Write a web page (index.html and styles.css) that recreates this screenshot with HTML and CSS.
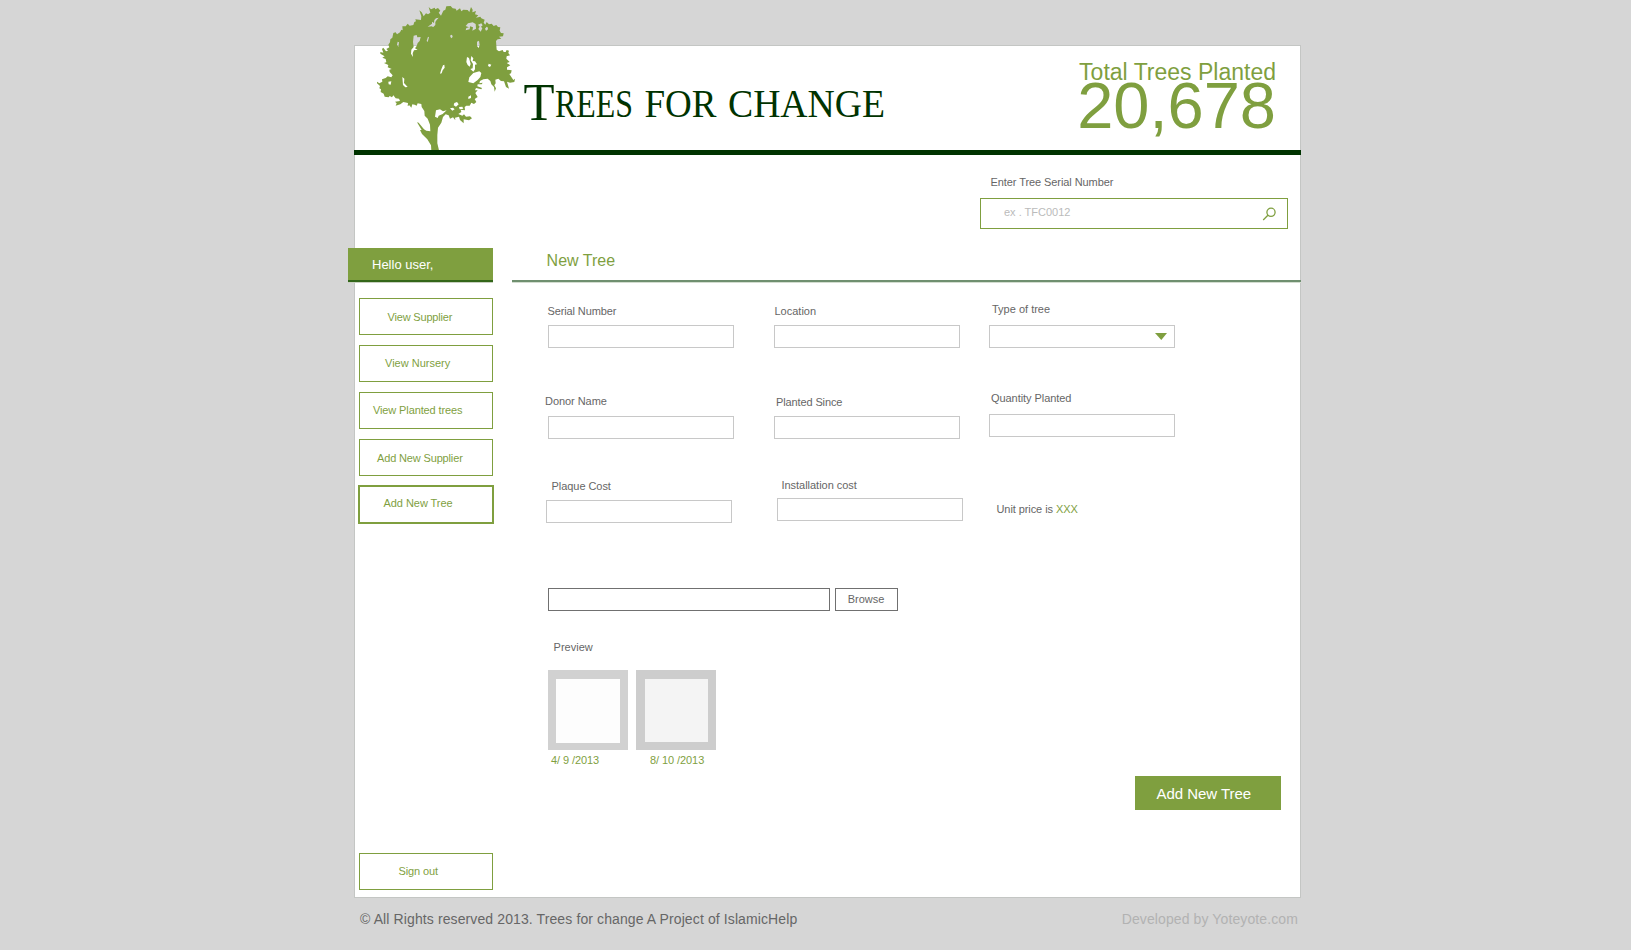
FILE: index.html
```html
<!DOCTYPE html>
<html lang="en">
<head>
<meta charset="utf-8">
<title>Trees for change</title>
<link rel="stylesheet" href="styles.css">
</head>
<body>
<div class="page">
  <div class="panel">
    <header class="header">
      <svg class="tree" viewBox="0 0 600 495" aria-hidden="true">
        <path fill="#7f9f3f" fill-rule="evenodd" d="M274 451L273 436L262 418L246 402L240 390L245 390L231 367L236 368L252 388L259 392L271 394L270 374L263 356L254 347L253 333L245 321L244 312L233 310L230 317L224 314L217 313L214 323L208 316L203 318L204 309L190 306L181 313L167 317L170 310L165 305L180 303L177 296L167 295L160 286L156 292L149 288L146 292L134 290L131 281L122 276L123 268L118 265L120 258L111 250V245L118 250L127 245L126 238L137 234L143 229L154 232L158 226L149 216L148 209L155 207L143 202L145 195L132 189L139 187L137 177L127 173L134 169L121 161V156L130 158L126 147L130 143L138 154L144 152L139 147L148 142L145 134L150 127L151 118L157 113L160 99L167 97L171 103L180 97L184 89L188 91L187 79L197 79L203 71L209 77L220 75L223 66L228 64L226 58L243 60L244 49L238 31L245 37L251 49L258 40L264 43L271 38L266 21L273 28L284 23L286 28L294 24L301 32L296 38L303 47L310 32L316 29L319 19L332 18L338 25L347 26L350 32L360 25L364 34L370 29L383 30L388 36L393 21L398 29L397 37L408 33L405 43L415 46L408 53L421 50L424 55L434 59L431 68L436 74L440 66L447 73L455 71L461 78L469 75L474 81L481 82L479 92L483 99L491 100L489 109L477 110L484 116L473 118L468 123L470 149L477 154L488 150L491 156L497 156L500 150L507 152L505 159L510 166L500 169L499 176L509 186L500 189L511 196L501 202L501 209L515 211L513 220L508 222L520 240L525 236L523 246L510 248L501 245L507 266L498 261L492 244L483 243L475 236L466 239L467 250L463 256L468 265L464 275L462 261L454 253L451 243L443 236L430 238L420 243L418 250L428 248L425 253L413 253L412 259L426 264L424 268L408 264L405 271L413 271L406 279L413 291L404 297L409 306L402 312L394 308L389 317L379 317L374 321L375 331L362 329L364 336L355 342L367 347L372 343L378 350L390 349L396 355L387 361L371 358V370L360 360L357 350L345 353L346 361L339 352L330 356L326 346L317 343L309 351L304 368L294 383L292 405L292 430L297 451Z
          M221 107L230 105L232 112L242 111L239 123L233 129L230 138L225 145L233 149L222 151L218 160L219 171L213 161L214 149L221 141L219 126Z
          M288 55L296 53L290 60L286 66V75L279 82L276 79L263 80L276 71L276 65L282 69L283 60Z
          M384 70L398 67L407 72L408 86L397 92L399 82L390 79L389 88L377 91L379 84L387 82L377 78Z
          M414 74L424 70L428 76L423 80L427 85L422 95L415 87L419 80Z
          M440 80L444 83L443 89L438 92L435 86Z
          M411 125L417 122L419 135L416 144L411 138Z
          M331 106L336 104L338 110L335 115L331 111Z
          M313 194L314 203L308 211L305 220L300 221L304 208L309 196Z
          M381 171L387 174L392 192L389 200L383 195L379 186Z
          M394 168L400 175L398 183L405 184L411 193L405 194L405 208L400 215L391 207L398 205L399 192L392 181Z
          M385 246L388 232L400 219L418 214L424 219L421 231L413 240L400 250Z
          M187 231L193 236L192 249L203 261L196 262L189 255Z
          M145 245L154 244L152 254L146 253Z
          M173 125L177 127L175 140L171 134Z
          M264 110L267 112L263 126L260 123Z
          M288 331L300 328L309 334L320 331L308 342L296 347L293 354L285 350Z
          M343 309L351 306L356 313L348 320L341 316Z
          M330 325L339 323L344 328L337 332Z
          M357 321L367 320L370 326L359 328Z
          M385 290L393 286L393 294L385 297Z
          M446 191L454 194L450 201L444 198Z"/>
      </svg>
      <svg class="wordmark" viewBox="0 0 364 44" role="img" aria-label="Trees for change">
        <g class="wordmark-text">
          <text x="-0.5" y="40" font-size="53" textLength="31" lengthAdjust="spacingAndGlyphs">T</text>
          <text x="31" y="37" font-size="40" textLength="78" lengthAdjust="spacingAndGlyphs">REES</text>
          <text x="120.5" y="37" font-size="40" textLength="72" lengthAdjust="spacingAndGlyphs">FOR</text>
          <text x="204" y="37" font-size="40" textLength="157" lengthAdjust="spacingAndGlyphs">CHANGE</text>
        </g>
      </svg>
      <div class="counter">
        <div class="counter-label">Total Trees Planted</div>
        <div class="counter-value">20,678</div>
      </div>
    </header>

    <section class="search">
      <div class="search-label">Enter Tree Serial Number</div>
      <div class="search-box">
        <span class="placeholder">ex . TFC0012</span>
        <svg class="search-icon" viewBox="0 0 14 14" aria-hidden="true">
          <circle cx="9" cy="5.3" r="4.1"/>
          <path d="M5.9 8.3L1.2 13"/>
        </svg>
      </div>
    </section>

    <div class="content">
      <aside class="sidebar">
        <div class="hello">Hello user,</div>
        <nav class="nav">
          <a class="nav-item supplier">View Supplier</a>
          <a class="nav-item nursery">View Nursery</a>
          <a class="nav-item planted">View Planted trees</a>
          <a class="nav-item new-supplier">Add New Supplier</a>
          <a class="nav-item new-tree">Add New Tree</a>
          <a class="nav-item sign-out">Sign out</a>
        </nav>
      </aside>

      <main class="main">
        <h1 class="title">New Tree</h1>
        <form class="form">
          <div class="row">
            <div class="field serial"><label>Serial Number</label><div class="input"></div></div>
            <div class="field location"><label>Location</label><div class="input"></div></div>
            <div class="field type"><label>Type of tree</label><div class="input select"><svg viewBox="0 0 12 7" class="arrow" aria-hidden="true"><path d="M0 0H12L6.3 7Z"/></svg></div></div>
          </div>
          <div class="row">
            <div class="field donor"><label>Donor Name</label><div class="input"></div></div>
            <div class="field since"><label>Planted Since</label><div class="input"></div></div>
            <div class="field quantity"><label>Quantity Planted</label><div class="input"></div></div>
          </div>
          <div class="row costs">
            <div class="field plaque"><label>Plaque Cost</label><div class="input"></div></div>
            <div class="field installation"><label>Installation cost</label><div class="input"></div></div>
            <div class="unit-price">Unit price is <span class="accent">XXX</span></div>
          </div>
          <div class="upload">
            <div class="file-box"></div>
            <div class="browse">Browse</div>
          </div>
          <div class="preview-label">Preview</div>
          <div class="previews">
            <figure class="preview first"><div class="thumb"></div><figcaption>4/ 9 /2013</figcaption></figure>
            <figure class="preview second"><div class="thumb"></div><figcaption>8/ 10 /2013</figcaption></figure>
          </div>
          <div class="submit">Add New Tree</div>
        </form>
      </main>
    </div>
  </div>
  <footer class="footer">
    <span class="copyright">© All Rights reserved 2013. Trees for change A Project of IslamicHelp</span>
    <span class="credit">Developed by Yoteyote.com</span>
  </footer>
</div>
</body>
</html>
```

FILE: styles.css
```css
* { box-sizing: border-box; }

body {
  margin: 0;
  height: 950px;
  overflow: hidden;
  background: #d6d6d6;
  color: #666;
  font: 11px/12px "Liberation Sans", Arial, sans-serif;
  white-space: nowrap;
}

.page { width: 947px; margin-left: 354px; padding-top: 45px; }

.panel {
  height: 853px;
  background: #fff;
  border: 1px solid #c4c6c4;
}

.header {
  position: relative;
  display: flex;
  justify-content: space-between;
  height: 109px;
  margin: 0 -1px;
  padding: 34px 25px 0 170px;
  border-bottom: 5px solid #003300;
}

/* The tree rises above the top edge of the panel. */
.tree { position: absolute; left: -14px; top: -46px; width: 200px; height: 165px; clip-path: inset(0 0 15px 0); }

.wordmark { width: 364px; height: 44px; overflow: visible; }
.wordmark-text { font-family: "Liberation Serif", "Times New Roman", serif; fill: #003300; }

.counter { color: #7f9f3f; margin-top: -21px; }
.counter-label { font-size: 23px; line-height: 26px; text-align: right; }
.counter-value { font-size: 65px; line-height: 65px; margin-top: -12px; text-align: right; }

.search { height: 93px; padding: 21px 12px 0 625px; }
.search-label { padding-left: 10.5px; letter-spacing: -0.08px; }
.search-box {
  display: flex;
  justify-content: space-between;
  width: 308px;
  height: 31px;
  margin-top: 10px;
  padding: 7px 11px 0 23px;
  border: 1px solid #7f9f3f;
}
.placeholder { color: #bbb; }
.search-icon { width: 14px; height: 14px; margin-top: 1px; fill: none; stroke: #7f9f3f; stroke-width: 1.3; }

.content { display: flex; margin: 0 -1px 0 -7px; }

.sidebar { width: 146px; }
.hello {
  width: 145px;
  height: 34px;
  padding: 9px 0 0 24px;
  background: #7f9f3f;
  border-bottom: 2px solid #336619;
  box-shadow: 0 1px #c8d0c0;
  color: #fff;
  font-size: 13px;
  line-height: 16px;
}
.nav { display: flex; flex-direction: column; padding: 16px 0 0 11px; }
.nav-item {
  width: 134px;
  height: 37px;
  margin-bottom: 10px;
  border: 1px solid #7f9f3f;
  color: #7f9f3f;
}
.supplier { padding: 12px 0 0 27.5px; letter-spacing: -0.18px; }
.nursery { padding: 11px 0 0 25px; }
.planted { padding: 11px 0 0 13px; letter-spacing: -0.12px; }
.new-supplier { padding: 12px 0 0 17px; margin-bottom: 9px; letter-spacing: -0.15px; }
.new-tree { width: 136px; height: 39px; margin-left: -1px; padding: 10px 0 0 23.5px; border-width: 2px; margin-bottom: 0; letter-spacing: -0.05px; }
.sign-out { margin: 329px 0 0; padding: 11px 0 0 38.5px; letter-spacing: -0.1px; }

.main { width: 789px; margin-left: 18px; }
.title {
  height: 34px;
  margin: 0;
  padding: 4px 0 0 34.6px;
  border-bottom: 2px solid #6f8f6f;
  box-shadow: 0 1px #d3ddd0;
  color: #7f9f3f;
  font-size: 16px;
  font-weight: normal;
  line-height: 18px;
}

.form { padding: 21px 0 0 36px; }
.row { display: grid; grid-template-columns: 226px 215px 186px; align-items: start; height: 89px; }
.row + .row { height: 87px; }
.row.costs { height: 109px; }
.field { display: flex; flex-direction: column; gap: 8px; }
.field label { display: block; height: 12px; }
.input { width: 186px; height: 23px; border: 1px solid #c8c8c8; }
.select { padding: 7px 7px 0 0; display: flex; justify-content: flex-end; }
.arrow { width: 12px; height: 7px; fill: #7f9f3f; }

.serial { padding-top: 2px; }
.serial label { margin-left: -0.6px; letter-spacing: -0.11px; }
.location { padding-top: 2px; }
.location label { padding-left: 0.5px; }
.type { gap: 10px; }
.type label { padding-left: 3px; }
.donor { padding-top: 3px; gap: 9px; }
.donor label { margin-left: -3px; letter-spacing: -0.05px; }
.since { padding-top: 4px; }
.since label { padding-left: 2px; letter-spacing: -0.12px; }
.quantity { gap: 10px; }
.quantity label { padding-left: 2px; letter-spacing: -0.06px; }
.plaque { padding-top: 1px; margin-left: -2px; }
.plaque label { padding-left: 5.5px; letter-spacing: -0.05px; }
.installation { margin-left: 3px; gap: 7px; }
.installation label { padding-left: 4.5px; letter-spacing: -0.03px; }
.unit-price { padding: 24px 0 0 7.5px; letter-spacing: -0.08px; }
.accent { color: #7f9f3f; }

.upload { display: flex; gap: 5px; }
.file-box { width: 282px; height: 23px; border: 1px solid #707070; }
.browse { width: 63px; height: 23px; padding: 4px 0 0 11.7px; border: 1px solid #707070; }

.preview-label { margin: 30px 0 17px; padding-left: 5.6px; }
.previews { display: flex; gap: 8px; }
.preview { width: 80px; margin: 0; color: #7f9f3f; }
.thumb { height: 80px; margin-bottom: 4px; border: 8px solid #d1d1d1; background: #fdfdfd; }
.first .thumb { border-width: 9px 8px 7px; }
.second .thumb { border-width: 9px 8px 8px 9px; border-color: #cdcdcd; background: #f4f4f4; }
.preview figcaption { letter-spacing: -0.08px; }
.first figcaption { padding-left: 3px; }
.second figcaption { padding-left: 14px; }

.submit {
  width: 146px;
  height: 34px;
  margin: 10px 0 0 587px;
  padding: 9px 0 0 21.5px;
  background: #7f9f3f;
  color: #fff;
  font-size: 15px;
  line-height: 17px;
  letter-spacing: -0.03px;
}

.footer { display: flex; justify-content: space-between; padding: 13px 3px 0 6px; font-size: 14px; line-height: 16px; letter-spacing: 0.11px; }
.credit { color: #b2b2b2; }
```
